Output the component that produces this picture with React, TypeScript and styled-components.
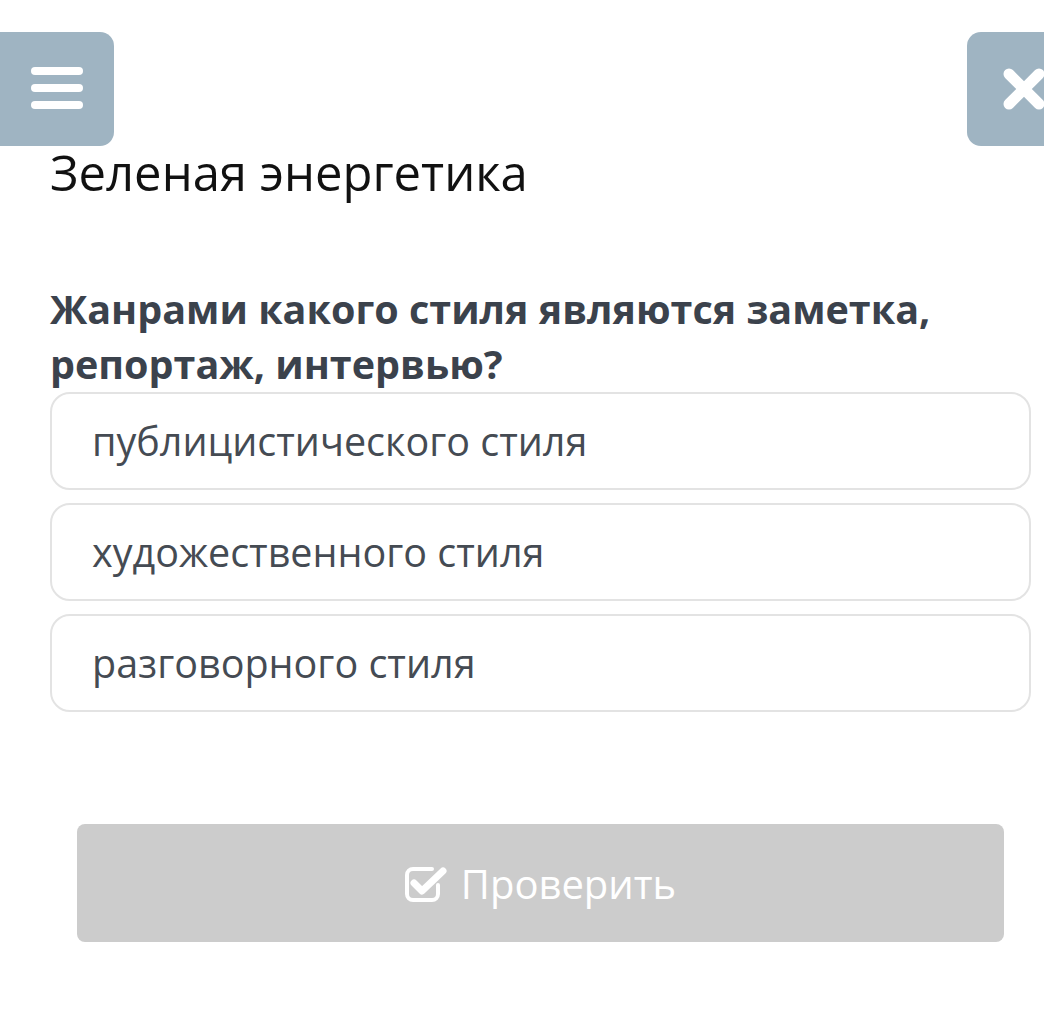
import React from "react";
import styled, { createGlobalStyle } from "styled-components";

const Global = createGlobalStyle`
  html, body { margin: 0; padding: 0; background: #ffffff; overflow-x: hidden; }
  body { font-family: "Open Sans", "Noto Sans", sans-serif; }
  * { box-sizing: border-box; }
`;

const Page = styled.div`
  width: 1044px;
  overflow: hidden;
  padding-top: 32px;
  min-height: 1026px;
`;

const Header = styled.div`
  display: flex;
  justify-content: space-between;
  align-items: flex-start;
`;

const IconButton = styled.button<{ $side: "left" | "right" }>`
  width: 114px;
  height: 114px;
  border: none;
  padding: 0;
  background: #9fb4c2;
  display: flex;
  align-items: center;
  justify-content: center;
  border-radius: ${(p) => (p.$side === "left" ? "0 14px 14px 0" : "14px 0 0 14px")};
  margin-right: ${(p) => (p.$side === "right" ? "-37px" : "0")};
  cursor: pointer;
`;

const Title = styled.h1`
  margin: 0 50px;
  font-weight: 400;
  font-size: 49px;
  line-height: 52px;
  color: #111111;
`;

const Question = styled.h2`
  margin: 84px 50px 0;
  font-weight: 700;
  font-size: 39.5px;
  line-height: 55px;
  color: #3b424c;
`;

const Options = styled.div`
  display: flex;
  flex-direction: column;
  gap: 13px;
  margin: 0 13px 0 50px;
`;

const Option = styled.div`
  height: 98px;
  border: 2px solid #e3e3e3;
  border-radius: 20px;
  display: flex;
  align-items: center;
  padding-left: 40px;
  font-size: 39.5px;
  color: #454b53;
`;

const SubmitButton = styled.button`
  margin: 112px 40px 0 77px;
  width: 927px;
  height: 118px;
  background: #cccccc;
  border: none;
  border-radius: 8px;
  display: flex;
  align-items: center;
  justify-content: center;
  gap: 14px;
  font-family: "Open Sans", "Noto Sans", sans-serif;
  font-size: 40px;
  color: #ffffff;
`;

const Menu = () => (
  <svg width="52" height="44" viewBox="0 0 52 44">
    <g stroke="#fff" strokeWidth="8" strokeLinecap="round">
      <line x1="4" y1="4" x2="48" y2="4" />
      <line x1="4" y1="21" x2="48" y2="21" />
      <line x1="4" y1="38" x2="48" y2="38" />
    </g>
  </svg>
);

const Close = () => (
  <svg width="44" height="44" viewBox="0 0 44 44">
    <g stroke="#fff" strokeWidth="11" strokeLinecap="round">
      <line x1="7" y1="7" x2="37" y2="37" />
      <line x1="37" y1="7" x2="7" y2="37" />
    </g>
  </svg>
);

const CheckIcon = () => (
  <svg width="42" height="38" viewBox="0 0 42 38">
    <path
      d="M27 5 H8 a6 6 0 0 0 -6 6 v19 a6 6 0 0 0 6 6 h19 a6 6 0 0 0 6 -6 v-9"
      fill="none"
      stroke="#fff"
      strokeWidth="4"
      strokeLinecap="round"
    />
    <path
      d="M9 19 L17 27 L38 7"
      fill="none"
      stroke="#fff"
      strokeWidth="7"
      strokeLinecap="round"
      strokeLinejoin="round"
    />
  </svg>
);

const options = ["публицистического стиля", "художественного стиля", "разговорного стиля"];

export default function App() {
  return (
    <Page>
      <Global />
      <Header>
        <IconButton $side="left" aria-label="menu">
          <Menu />
        </IconButton>
        <IconButton $side="right" aria-label="close">
          <Close />
        </IconButton>
      </Header>
      <Title>Зеленая энергетика</Title>
      <Question>Жанрами какого стиля являются заметка, репортаж, интервью?</Question>
      <Options>
        {options.map((o) => (
          <Option key={o}>{o}</Option>
        ))}
      </Options>
      <SubmitButton>
        <CheckIcon />
        Проверить
      </SubmitButton>
    </Page>
  );
}
